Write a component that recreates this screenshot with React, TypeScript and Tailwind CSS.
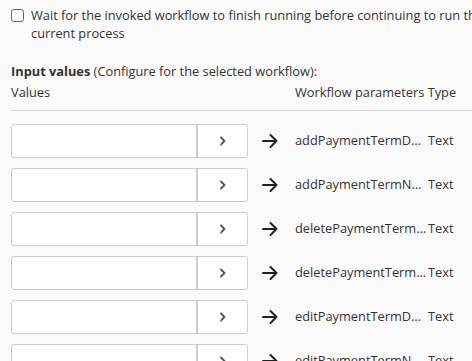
import React from "react";

const params = [
  "addPaymentTermDescription",
  "addPaymentTermName",
  "deletePaymentTermDescription",
  "deletePaymentTermName",
  "editPaymentTermDescription",
  "editPaymentTermName",
];

function Chevron() {
  return (
    <svg width="8" height="10" viewBox="0 0 8 10" fill="none">
      <path d="M2 1.5 L5.5 5 L2 8.5" stroke="#555" strokeWidth="1.8" strokeLinecap="round" strokeLinejoin="round" />
    </svg>
  );
}

function Arrow() {
  return (
    <svg width="16" height="14" viewBox="0 0 16 14" fill="none">
      <path d="M1 7 H14.5 M8.5 1 L14.5 7 L8.5 13" stroke="#222" strokeWidth="2" strokeLinecap="round" strokeLinejoin="round" />
    </svg>
  );
}

export default function App() {
  return (
    <div
      className="w-[472px] h-[361px] overflow-hidden bg-[#fafafa] text-[12.8px] text-[#333]"
      style={{ fontFamily: '"Open Sans", "Noto Sans", sans-serif' }}
    >
      <div className="flex items-start pl-[11px] pt-[6px] leading-[18px]">
        <div className="mt-[3px] w-[13px] h-[13px] shrink-0 rounded-[3px] border border-[#666] bg-white" />
        <div className="ml-[7px] whitespace-nowrap">
          Wait for the invoked workflow to finish running before continuing to run the
          <br />
          current process
        </div>
      </div>
      <div className="pl-[11px] mt-[20px] leading-[18px]">
        <span className="font-bold">Input values</span> (Configure for the selected workflow):
      </div>
      <div className="ml-[11px] mt-[3px] flex leading-[18px] pb-[9px] border-b border-[#ddd]">
        <div className="w-[284px]">Values</div>
        <div className="whitespace-nowrap">Workflow parameters Type</div>
      </div>
      <div className="ml-[11px] mt-[13px] flex flex-col gap-[10px]">
        {params.map((p) => (
          <div key={p} className="flex items-center h-[34px]">
            <div className="flex w-[237px] h-[34px] rounded-[3px] border border-[#ccc] bg-white overflow-hidden">
              <div className="w-[186px] border-r-2 border-[#ccc]" />
              <div className="flex-1 flex items-center justify-center">
                <Chevron />
              </div>
            </div>
            <div className="ml-[14px] w-[33px] flex items-center">
              <Arrow />
            </div>
            <div className="w-[133px] truncate">{p}</div>
            <div>Text</div>
          </div>
        ))}
      </div>
    </div>
  );
}
